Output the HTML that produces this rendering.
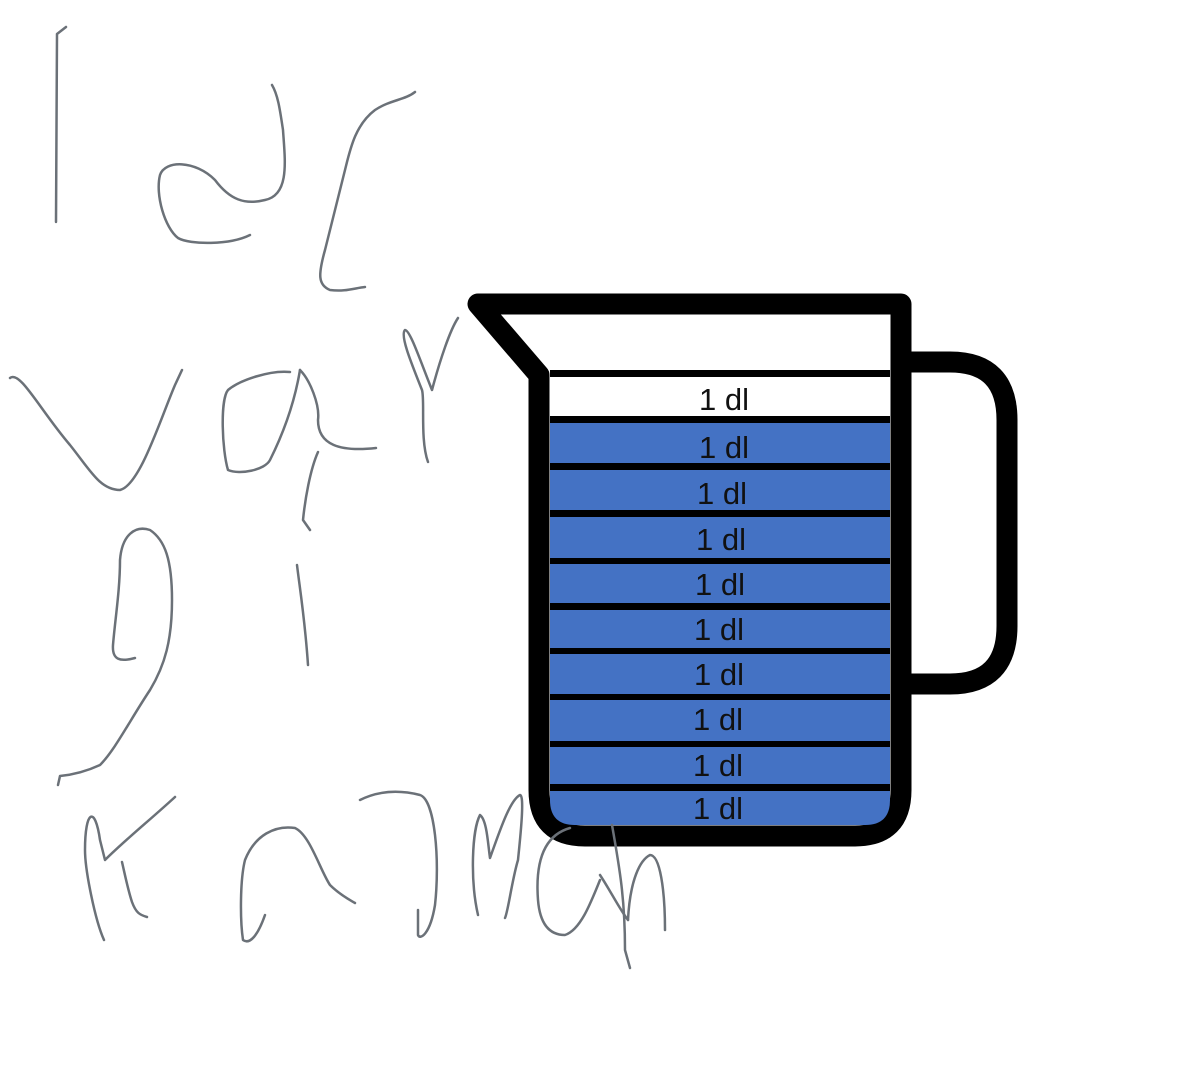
<!DOCTYPE html>
<html><head><meta charset="utf-8"><style>
html,body{margin:0;padding:0;background:#fff;}
svg{display:block;}
text{font-family:"Liberation Sans",sans-serif;font-size:31px;fill:#111;}
</style></head><body>
<svg width="1200" height="1076" viewBox="0 0 1200 1076" xmlns="http://www.w3.org/2000/svg">
<rect width="1200" height="1076" fill="#fff"/>
<path d="M905,362 L950,362 Q1007,362 1007,420 L1007,626 Q1007,684 950,684 L905,684" fill="none" stroke="#000" stroke-width="21"/>
<path d="M478,304 L901,304 L901,790 Q901,836 855,836 L585,836 Q539,836 539,790 L539,375 Z" fill="#fff" stroke="#000" stroke-width="21" stroke-linejoin="round"/>
<rect x="550" y="370" width="340" height="7" fill="#000"/>
<g fill="#4472C4">
<rect x="550" y="423" width="340" height="40"/>
<rect x="550" y="470" width="340" height="40"/>
<rect x="550" y="517" width="340" height="41"/>
<rect x="550" y="564" width="340" height="39"/>
<rect x="550" y="610" width="340" height="38"/>
<rect x="550" y="654" width="340" height="40"/>
<rect x="550" y="700" width="340" height="41"/>
<rect x="550" y="747" width="340" height="37"/>
<path d="M550,791 L890,791 L890,800 Q890,825 865,825 L575,825 Q550,825 550,800 Z"/>
</g>
<g fill="#000">
<rect x="550" y="416" width="340" height="7"/>
<rect x="550" y="463" width="340" height="7"/>
<rect x="550" y="510" width="340" height="7"/>
<rect x="550" y="558" width="340" height="6"/>
<rect x="550" y="603" width="340" height="7"/>
<rect x="550" y="648" width="340" height="6"/>
<rect x="550" y="694" width="340" height="6"/>
<rect x="550" y="741" width="340" height="6"/>
<rect x="550" y="784" width="340" height="7"/>
</g>
<g text-anchor="middle">
<text x="724" y="410">1 dl</text>
<text x="724" y="458">1 dl</text>
<text x="722" y="504">1 dl</text>
<text x="721" y="550">1 dl</text>
<text x="720" y="595">1 dl</text>
<text x="719" y="640">1 dl</text>
<text x="719" y="685">1 dl</text>
<text x="718" y="730">1 dl</text>
<text x="718" y="776">1 dl</text>
<text x="718" y="819">1 dl</text>
</g>
<g fill="none" stroke="#6b7178" stroke-width="2.5" stroke-linecap="round" stroke-linejoin="round">
<path d="M66,27 L57,34 L56,222"/>
<path d="M250,235 C230,245 190,245 178,238 C165,228 155,195 160,175 C165,160 195,160 215,180 C230,200 245,205 265,200 C290,195 285,160 283,130 C280,110 278,95 272,85"/>
<path d="M415,92 C405,100 390,100 375,110 C355,125 350,150 345,170 L325,250 C318,275 318,285 330,290 C345,292 355,288 365,287"/>
<path d="M10,378 C20,370 40,410 70,445 C90,470 100,490 120,490 C140,485 160,420 175,385 L182,370"/>
<path d="M290,372 C270,370 240,380 228,390 C220,400 222,450 228,470 C240,475 265,470 270,460 C285,430 295,400 300,370"/>
<path d="M300,370 C310,380 320,405 318,420 C318,445 340,452 376,448"/>
<path d="M428,462 C420,440 425,400 422,390 C410,360 400,335 405,330 C410,330 420,360 432,390 C440,360 450,330 458,318"/>
<path d="M318,452 C310,470 305,500 303,520 L310,530"/>
<path d="M297,565 C300,590 305,620 308,665"/>
<path d="M135,658 C120,662 112,660 113,645 C115,620 120,590 120,560 C122,535 135,525 150,530 C165,540 172,560 172,600 C172,640 165,665 150,690 C130,720 115,750 100,765 C85,772 70,775 60,776 L58,785"/>
<path d="M104,940 C95,920 85,870 85,850 C85,810 95,805 100,840 L105,860 C125,840 150,820 175,797"/>
<path d="M122,862 C125,875 128,890 132,902 C136,913 140,915 147,917"/>
<path d="M265,915 C258,935 250,945 243,940 C240,920 240,880 245,860 C255,835 275,825 295,828 C310,835 320,870 330,885 C340,895 350,900 355,903"/>
<path d="M360,800 C380,790 400,790 420,795 C435,800 440,860 435,905 C430,935 420,940 418,935 L418,910"/>
<path d="M478,915 C470,880 472,830 480,815 C487,820 488,845 490,858 C500,830 510,800 520,795 C525,795 520,840 518,860 C512,880 508,912 505,918"/>
<path d="M570,828 C545,835 535,860 538,900 C540,925 550,935 565,935 C580,930 590,905 600,880"/>
<path d="M612,825 C620,870 625,900 625,950 L630,968"/>
<path d="M600,875 C610,890 620,910 628,920"/>
<path d="M628,920 C630,880 640,860 650,855 C660,855 665,890 665,930"/>
</g>
</svg>
</body></html>
